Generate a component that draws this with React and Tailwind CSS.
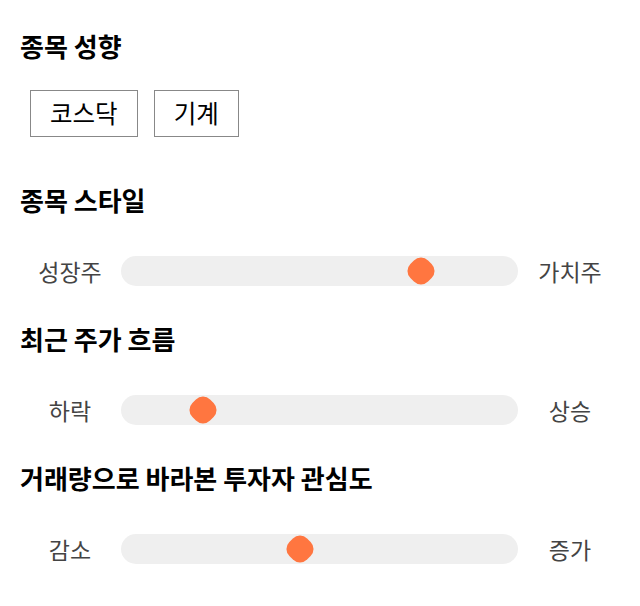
import React from "react";

const font = { fontFamily: '"Noto Sans CJK KR", "Noto Sans", sans-serif' };

const Slider = ({ left, right, value }) => (
  <div className="flex items-center h-[60px]">
    <div className="w-[100px] shrink-0 text-center text-[23px] text-[#444]">{left}</div>
    <div className="relative w-[397px] shrink-0 h-[30px] ml-[1px] rounded-full bg-[#efefef]">
      <div
        className="absolute top-1/2 w-[25px] h-[25px] -translate-x-1/2 -translate-y-1/2 rotate-45 rounded-[10px] bg-[#ff7640]"
        style={{ left: `${value}%` }}
      />
    </div>
    <div className="w-[104px] shrink-0 text-center text-[23px] text-[#444]">{right}</div>
  </div>
);

const App = () => {
  return (
    <div className="w-[640px] h-[606px] bg-white text-black px-5 pt-[26px]" style={font}>
      {/* 종목 성향 */}
      <h2 className="text-[26px] font-bold leading-[40px]">종목 성향</h2>
      <div className="flex gap-4 mt-[24px] ml-[10px]">
        <button className="h-[47px] px-[19px] border border-[#888] text-[24.5px] leading-none">코스닥</button>
        <button className="h-[47px] px-[19px] border border-[#888] text-[24.5px] leading-none">기계</button>
      </div>

      {/* 종목 스타일 */}
      <h2 className="text-[26px] font-bold leading-[40px] mt-[43px]">종목 스타일</h2>
      <div className="mt-[21px]">
        <Slider left="성장주" right="가치주" value={75.5} />
      </div>

      {/* 최근 주가 흐름 */}
      <h2 className="text-[26px] font-bold leading-[40px] mt-[18px]">최근 주가 흐름</h2>
      <div className="mt-[21px]">
        <Slider left="하락" right="상승" value={20.7} />
      </div>

      {/* 거래량 */}
      <h2 className="text-[26px] font-bold leading-[40px] mt-[18px]">거래량으로 바라본 투자자 관심도</h2>
      <div className="mt-[21px]">
        <Slider left="감소" right="증가" value={45} />
      </div>
    </div>
  );
};

export default App;
